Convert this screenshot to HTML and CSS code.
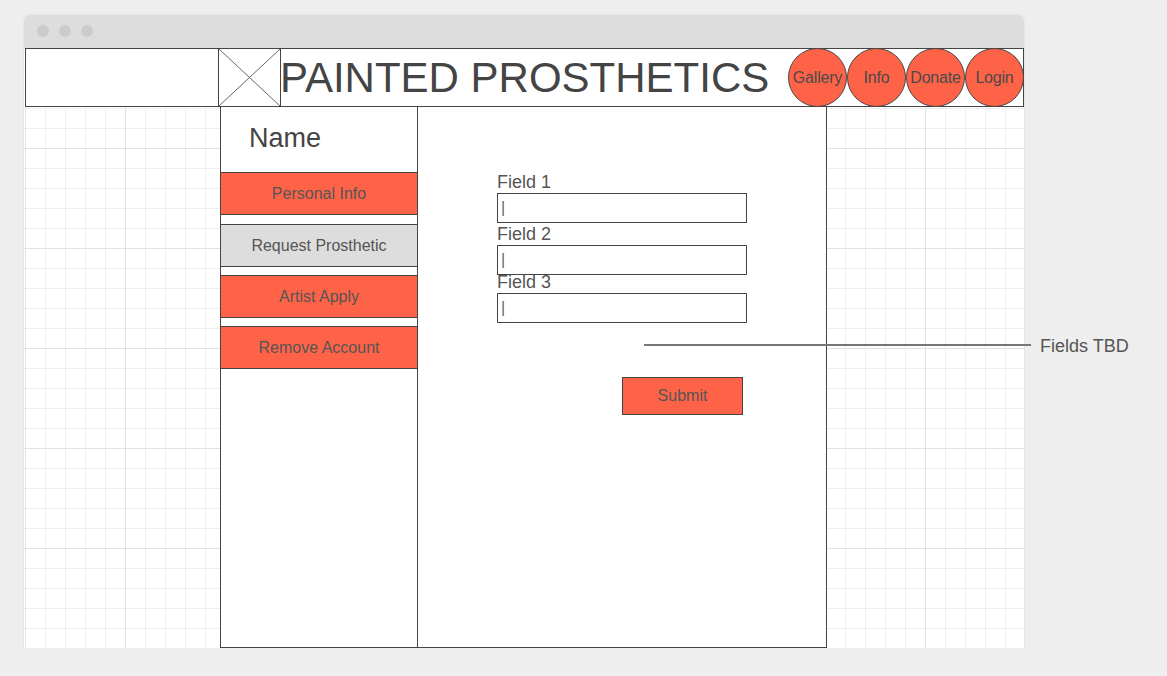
FILE: index.html
```html
<!DOCTYPE html>
<html lang="en">
<head>
<meta charset="utf-8">
<title>Painted Prosthetics – Account</title>
<link rel="stylesheet" href="styles.css">
</head>
<body>
<div class="window">
  <div class="titlebar">
    <span class="dot"></span><span class="dot"></span><span class="dot"></span>
  </div>
  <div class="canvas">
    <header class="site-header">
      <div class="brand-spacer"></div>
      <div class="logo-ph">
        <svg width="61" height="57" viewBox="0 0 61 57" preserveAspectRatio="none">
          <line x1="0" y1="0" x2="61" y2="57" stroke="#666" stroke-width="1"/>
          <line x1="61" y1="0" x2="0" y2="57" stroke="#666" stroke-width="1"/>
        </svg>
      </div>
      <h1 class="title">PAINTED PROSTHETICS</h1>
      <nav class="nav">
        <a class="nav-item">Gallery</a>
        <a class="nav-item">Info</a>
        <a class="nav-item">Donate</a>
        <a class="nav-item">Login</a>
      </nav>
    </header>
    <div class="body-row">
      <aside class="sidebar">
        <div class="name">Name</div>
        <div class="menu">
          <div class="menu-item">Personal Info</div>
          <div class="menu-item muted">Request Prosthetic</div>
          <div class="menu-item">Artist Apply</div>
          <div class="menu-item">Remove Account</div>
        </div>
      </aside>
      <main class="panel">
        <div class="form">
          <div class="label">Field 1</div>
          <div class="control">|</div>
          <div class="label label-2">Field 2</div>
          <div class="control">|</div>
          <div class="label label-3">Field 3</div>
          <div class="control">|</div>
          <div class="submit">Submit</div>
        </div>
      </main>
    </div>
    <div class="anno-line"></div>
    <div class="anno-text">Fields TBD</div>
  </div>
</div>
</body>
</html>
```

FILE: styles.css
```css
* { box-sizing: border-box; }

html, body {
  margin: 0;
  padding: 0;
  background: #eeeeee;
  font-family: "Liberation Sans", Arial, sans-serif;
  color: #444;
}

.window {
  margin: 15px 0 0 24px;
  width: 1000px;
  border-radius: 6px 6px 0 0;
  box-shadow: 0 0 2px rgba(0, 0, 0, 0.12);
  background: #fff;
}

.titlebar {
  height: 33px;
  background: #dddddd;
  border-radius: 6px 6px 0 0;
  display: flex;
  align-items: center;
  gap: 10px;
  padding: 0 0 1px 13px;
}

.dot {
  width: 12px;
  height: 12px;
  border-radius: 50%;
  background: #cbcbcb;
}

.canvas {
  position: relative;
  height: 600px;
  display: flex;
  flex-direction: column;
  background-color: #fff;
  background-image:
    linear-gradient(to right, #e2e2e2 1px, transparent 1px),
    linear-gradient(to bottom, #e2e2e2 1px, transparent 1px),
    linear-gradient(to right, #efefef 1px, transparent 1px),
    linear-gradient(to bottom, #efefef 1px, transparent 1px);
  background-size: 100px 100px, 100px 100px, 20px 20px, 20px 20px;
  background-position: 1px 0, 1px 0, 1px 0, 1px 0;
}

/* header */
.site-header {
  margin-left: 1px;
  width: 999px;
  height: 59px;
  border: 1px solid #444;
  background: #fff;
  display: flex;
  align-items: center;
  flex-shrink: 0;
}

.brand-spacer {
  width: 192px;
  align-self: stretch;
}

.logo-ph {
  width: 63px;
  align-self: stretch;
  border-left: 1px solid #444;
  border-right: 1px solid #444;
  display: flex;
}

.logo-ph svg { display: block; }

.title {
  flex: 1;
  margin: 1px 0 0 -1px;
  font-size: 42px;
  font-weight: normal;
  line-height: normal;
  color: #444;
  white-space: nowrap;
}

.nav {
  display: flex;
  margin-right: -1px;
}

.nav-item {
  width: 59px;
  height: 59px;
  border: 1px solid #444;
  border-radius: 50%;
  background: #ff6347;
  display: flex;
  align-items: center;
  justify-content: center;
  font-size: 16px;
  color: #4a4a4a;
  white-space: nowrap;
  letter-spacing: -0.2px;
}

.nav-item:first-child { margin-left: -1px; }

/* body */
.body-row {
  flex: 1;
  display: flex;
  padding-left: 196px;
}

.sidebar {
  width: 198px;
  border-left: 1px solid #444;
  border-right: 1px solid #444;
  border-bottom: 1px solid #444;
  background: #fff;
}

.name {
  height: 65px;
  padding: 16px 0 0 28px;
  font-size: 27px;
  line-height: 31px;
  color: #444;
}

.menu-item {
  height: 43px;
  border-top: 1px solid #444;
  border-bottom: 1px solid #444;
  background: #ff6347;
  display: flex;
  align-items: center;
  justify-content: center;
  font-size: 16px;
  color: #555;
}

.menu-item + .menu-item { margin-top: 8px; }
.menu-item.muted { background: #dddddd; margin-top: 9px; }

.panel {
  width: 409px;
  border-right: 1px solid #444;
  border-bottom: 1px solid #444;
  background: #fff;
}

.form {
  padding: 65px 0 0 79px;
  display: flex;
  flex-direction: column;
  align-items: flex-start;
}

.label {
  font-size: 18px;
  line-height: 21px;
  color: #555;
}

.label-2 { margin-top: 1px; }
.label-3 { margin-top: -3px; }

.control {
  width: 250px;
  height: 30px;
  border: 1px solid #444;
  background: #fff;
  padding-left: 3px;
  font-size: 16px;
  line-height: 28px;
  color: #666;
}

.submit {
  margin: 54px 0 0 125px;
  width: 121px;
  height: 38px;
  border: 1px solid #444;
  background: #ff6347;
  display: flex;
  align-items: center;
  justify-content: center;
  font-size: 16px;
  color: #555;
}

/* annotation overlay */
.anno-line {
  position: absolute;
  left: 620px;
  top: 296px;
  width: 387px;
  height: 2px;
  background: #777;
}

.anno-text {
  position: absolute;
  left: 1016px;
  top: 288px;
  font-size: 18px;
  line-height: 21px;
  color: #555;
  white-space: nowrap;
}
```
